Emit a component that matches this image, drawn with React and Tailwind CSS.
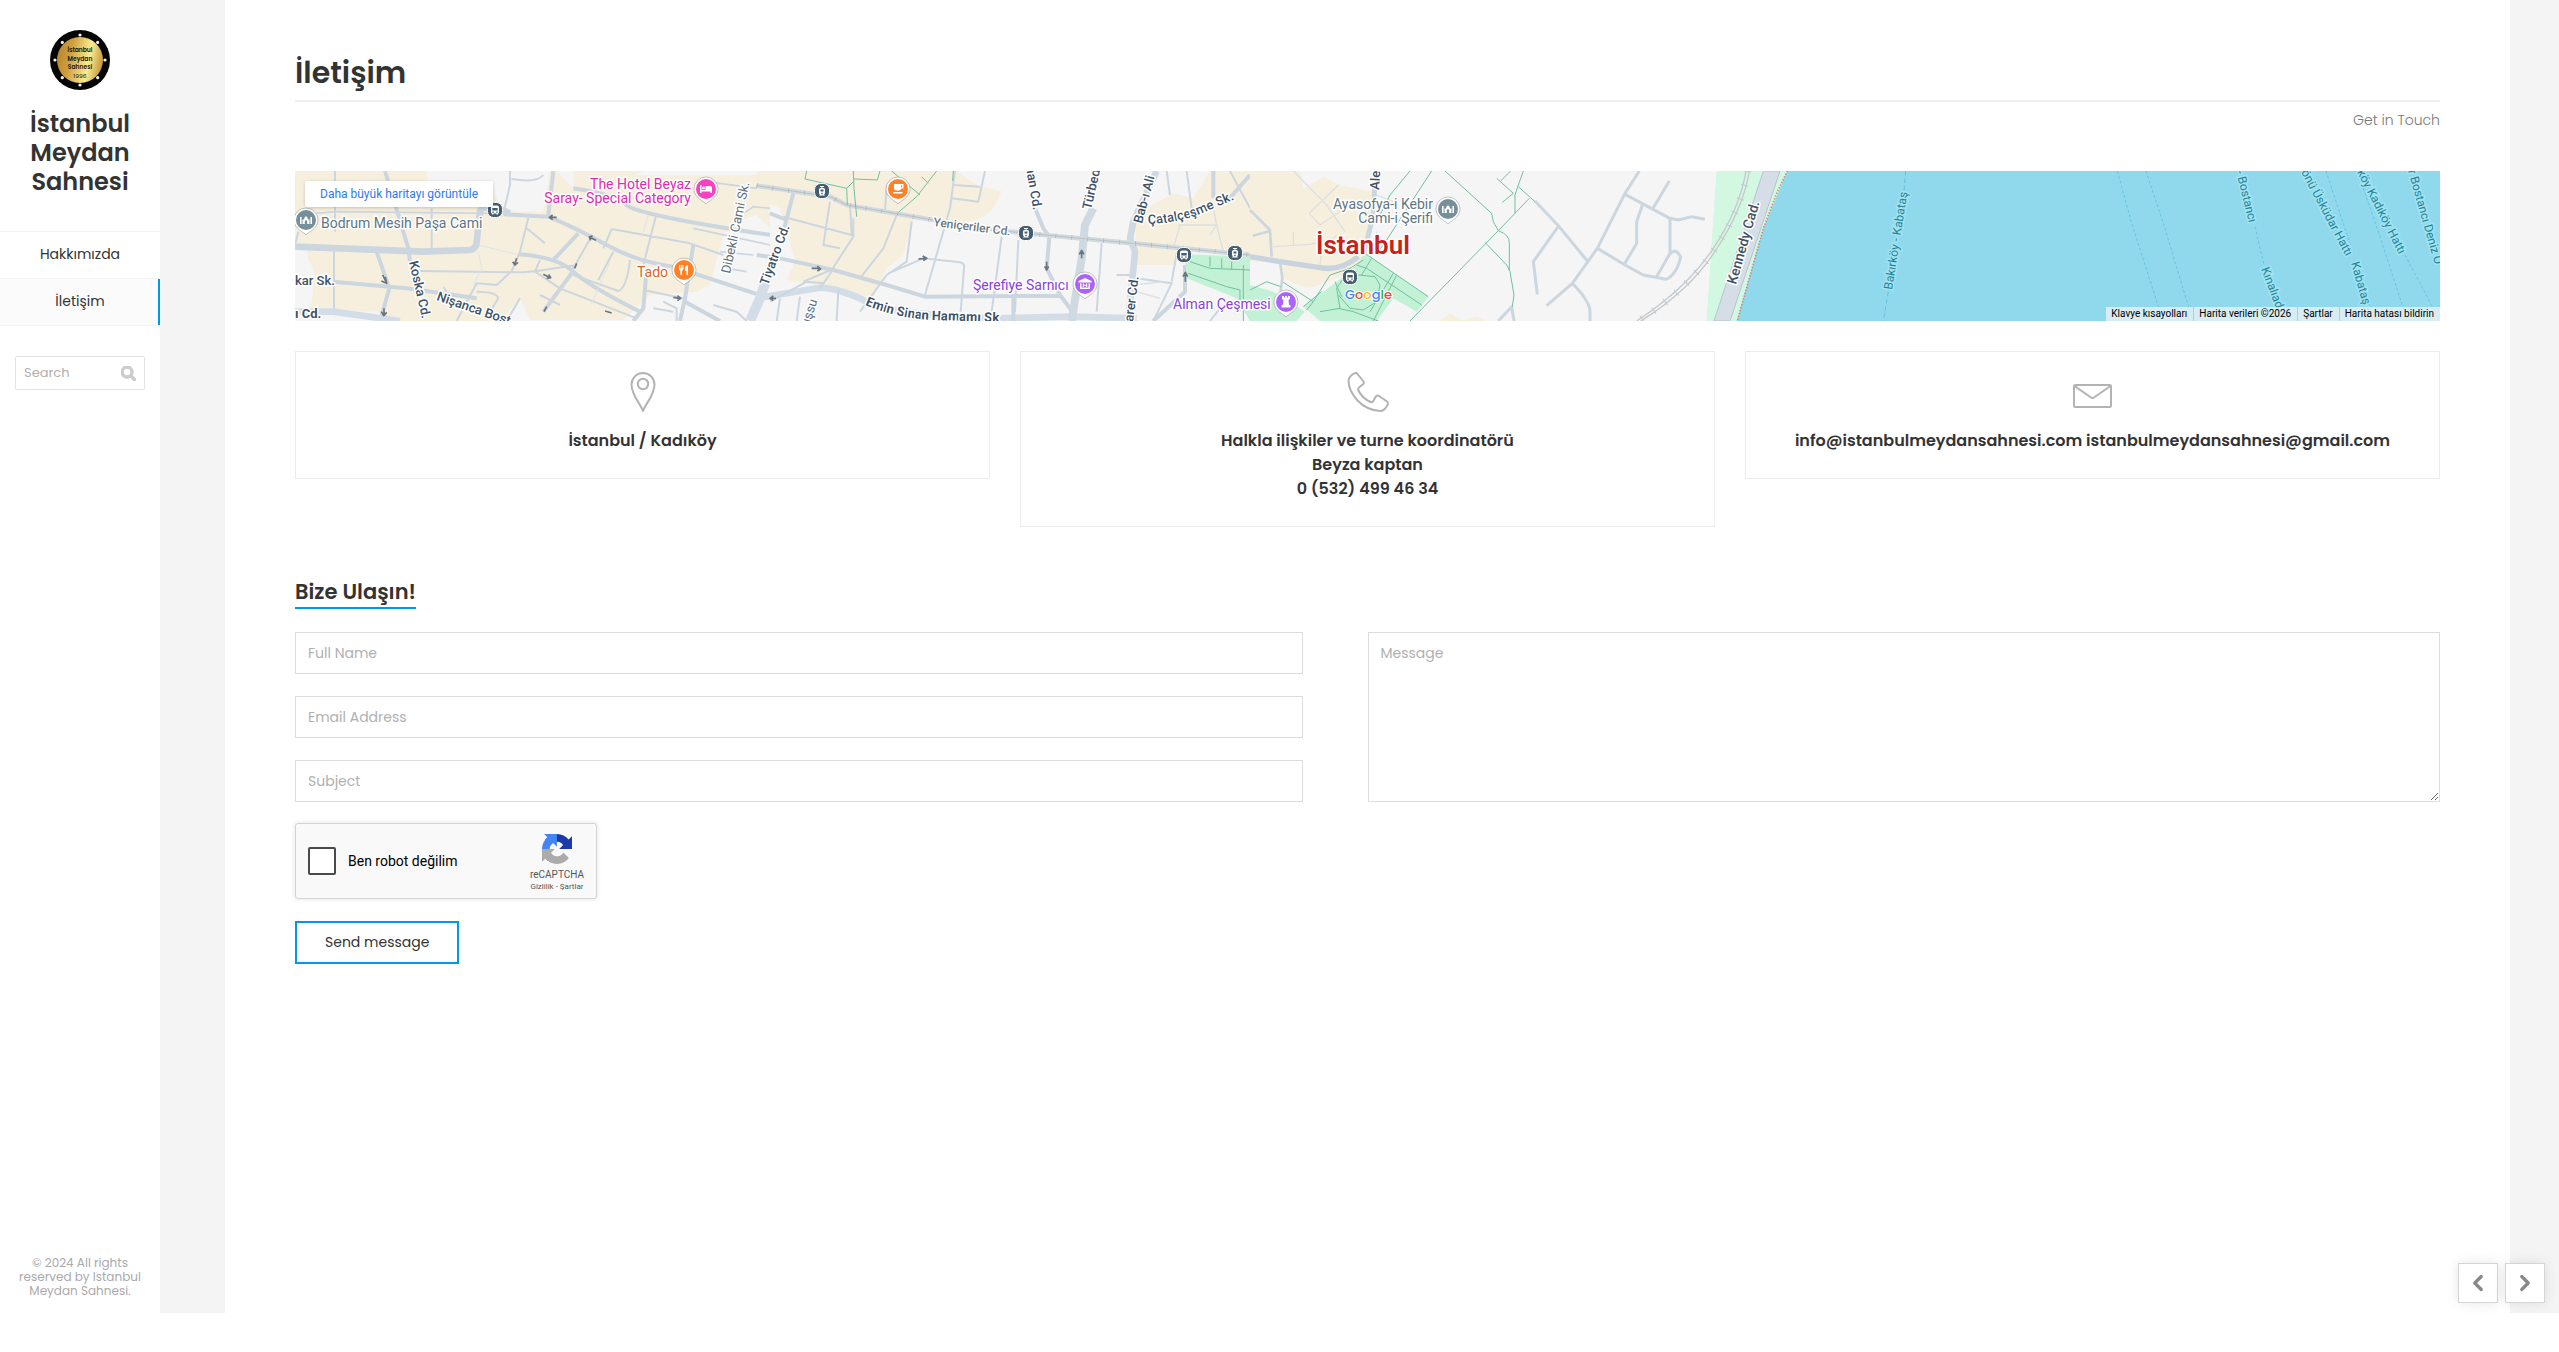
import { ChevronLeft, ChevronRight } from "lucide-react";
import { FaSearch } from "react-icons/fa";

const navLinks = [
  { title: "Hakkımızda", active: false },
  { title: "İletişim", active: true },
];

const fields = [
  { name: "fullname", placeholder: "Full Name", type: "text" },
  { name: "email", placeholder: "Email Address", type: "email" },
  { name: "subject", placeholder: "Subject", type: "text" },
];

const mapLinks = ["Klavye kısayolları", "Harita verileri ©2026", "Şartlar", "Harita hatası bildirin"];

function Logo() {
  const studs = [0, 45, 90, 135, 180, 225, 270, 315];
  return (
    <svg viewBox="0 0 60 60" className="w-[60px] h-[60px]" role="img" aria-label="Logo">
      <defs>
        <linearGradient id="gold" x1="0" x2="1" y1="0.3" y2="0.5">
          <stop offset="0" stopColor="#b8862f" />
          <stop offset="0.3" stopColor="#cf9f3f" />
          <stop offset="0.7" stopColor="#f9ec92" />
          <stop offset="1" stopColor="#c8983a" />
        </linearGradient>
      </defs>
      <circle cx="30" cy="30" r="30" fill="#050505" />
      <circle cx="30" cy="30" r="23" fill="url(#gold)" />
      {studs.map((a) => (
        <circle key={a} cx="30" cy="5" r="1.6" fill="#f4f4f4" transform={`rotate(${a} 30 30)`} />
      ))}
      <g fontFamily="Poppins, Inter, sans-serif" fontSize="6" fontWeight="600" fill="#1c1508" textAnchor="middle">
        <text x="30" y="22">İstanbul</text>
        <text x="30" y="31">Meydan</text>
        <text x="30" y="39">Sahnesi</text>
        <text x="30" y="48" fontWeight="400">1996</text>
      </g>
    </svg>
  );
}

function Sidebar() {
  return (
    <aside className="w-40 shrink-0 bg-white flex flex-col text-center pt-[30px] pb-[15px]">
      <div className="flex justify-center">
        <Logo />
      </div>
      <p className="mt-[19px] px-4 text-[24px] leading-[29px] font-semibold text-[#333]">
        İstanbul Meydan Sahnesi
      </p>
      <nav className="mt-[35px] border-t border-[#f4f4f4]">
        {navLinks.map((link) => (
          <a
            key={link.title}
            href="#"
            className={
              link.active
                ? "block h-[47px] leading-[44px] text-[14px] text-[#333] border-b border-[#f4f4f4] bg-[#fbfbfb] shadow-[inset_-2px_0_0_#0099e5]"
                : "block h-[47px] leading-[44px] text-[14px] text-[#333] border-b border-[#f4f4f4]"
            }
          >
            {link.title}
          </a>
        ))}
      </nav>
      <form className="mx-[15px] mt-[30px] h-[34px] flex items-center border border-[#e2e2e2] rounded-xs px-2">
        <input
          type="search"
          aria-label="Search"
          placeholder="Search"
          className="min-w-0 flex-1 text-[13px] outline-none placeholder:text-[#b0b0b0]"
        />
        <button type="button" aria-label="Search" className="text-[#ccc]">
          <FaSearch size={15} stroke="currentColor" strokeWidth={36} />
        </button>
      </form>
      <p className="mt-auto px-4 text-[12px] leading-[14px] text-[#aaa]">
        © 2024 All rights <br />
        reserved by Istanbul <br />
        Meydan Sahnesi.
      </p>
    </aside>
  );
}

// Pin with a round head, tip at (x, y)
function MapPin({ x, y, color, children }) {
  return (
    <g transform={`translate(${x} ${y})`}>
      <path
        d="M0 0C-2 -3 -12 -6 -12 -15A12 12 0 0 1 12 -15C12 -6 2 -3 0 0Z"
        fill="#fff"
        stroke="#8a8a8a"
        strokeOpacity="0.5"
        strokeWidth="1"
      />
      <circle cx="0" cy="-15" r="10" fill={color} />
      <g transform="translate(0 -15)" fill="#fff" stroke="none">
        {children}
      </g>
    </g>
  );
}

function Mosque() {
  return <path d="M-6 4v-7h1.600v7zM4.400 4v-7h1.600v7zM-3.500 4v-4.500h1.500q0-2 2-3.500q2 1.500 2 3.500h1.500v4.500h-2.300v-2.500a1.200 1.200 0 0 0-2.400 0v2.500z" />;
}

// Small round bus and tram stops
function Station({ x, y, tram }) {
  return (
    <g transform={`translate(${x} ${y})`}>
      <rect x="-7.500" y="-7.500" width="15" height="15" rx="6" fill="#455d70" stroke="#fff" strokeWidth="1" />
      {tram ? (
        <path
          d="M-2 -5h4v1h-1.500v1h1q1.500 0 1.500 1.500v3.500q0 1-1 1l1 1.500h-6l1-1.500q-1 0-1-1v-3.500q0-1.500 1.500-1.500h1v-1h-1.500zM-1.500 -1.500v2h3v-2zM-.7 1.800v1.400h1.400v-1.400z"
          fill="#fff"
          fillRule="evenodd"
        />
      ) : (
        <path
          d="M-4 -2.500q0-2 2-2h4q2 0 2 2v5q0 1-1 1v1h-1.500v-1h-3v1h-1.500v-1q-1 0-1-1zM-2.700 -2v2.500h5.400v-2.500zM-2.700 1.500v1.200h1.500v-1.200zM1.200 1.500v1.200h1.500v-1.200z"
          fill="#fff"
          fillRule="evenodd"
        />
      )}
    </g>
  );
}

function StreetMap() {
  return (
    <svg
      viewBox="0 0 2145 150"
      preserveAspectRatio="xMidYMid slice"
      className="block w-full h-[150px]"
      role="img"
      aria-label="İstanbul"
    >
      <defs>
        <path id="catalcesme" d="M853 53Q885 52 910 41T948 25" />
        <path id="emin" d="M570 134Q604 148 640 149T730 152" />
      </defs>
      <rect width="2145" height="150" fill="#f5f5f5" />
      <g transform="translate(-5 -6) scale(0.333333)" fill="none" strokeLinejoin="round">
        {/* Western blocks */}
        <path
          d="M15 18H410L415 55 560 75 620 18H800L850 70 1020 30H1440V190L1400 150 1340 170 1300 210 1260 360 1220 380 1080 390 1000 465H720L690 400 630 468H330L260 440 60 435 70 380 50 250H15Z"
          fill="#f7efdd"
        />
        <path d="M540 18H780L760 140 640 140 600 60Z" fill="#f5f5f5" />
        <path d="M850 18H1060L1010 40 1080 90 1020 190 950 130 850 70Z" fill="#f7efdd" />
        <path d="M15 290H60L75 330 50 420H15Z" fill="#f5f5f5" />
        <g stroke="#ccd6df" strokeWidth="6">
          <path d="M135 18V200M132 250V440M425 130V250M15 240 25 200M390 318 700 322 740 318 860 300M660 18V60L640 145M665 42Q740 55 760 30M715 158 690 260 665 318 620 360 560 355 530 410 500 468M750 285 735 320 810 370 1040 460M710 190 765 235M900 222 830 345M970 260 925 345M965 192 1200 235 1300 270M965 192 940 250M1020 285Q1010 370 985 378L850 330M560 380Q620 380 625 400L600 440M690 400 650 468M750 390 810 420M1060 375 1180 400M1100 145 1060 300M1270 420 1340 440 1370 468M1090 430 1150 440M1120 410 1160 430V468" />
          <path d="M1250 50 1400 70 1440 80M1210 190 1440 240M1340 160 1390 125 1440 130M1290 260 1390 270M1310 310 1370 320M460 365 470 380 450 400M15 150 140 140 600 145" strokeWidth="5" />
        </g>
        <g stroke="#ccd6df" strokeWidth="12">
          <path d="M285 18 355 250 360 290M260 260 298 370 275 450 310 468M130 350 350 370 560 400M790 18 775 150M865 205 790 285M850 318 760 440M640 148 775 155Q860 190 950 240T1150 305L1440 400M1210 240 1185 400 1170 468M850 70Q980 90 1010 120T1440 210" />
          <path d="M685 268Q800 275 850 320T1050 440M1070 310 1060 430 1030 468M1185 410 1290 468" />
        </g>
        <path d="M15 245 400 260 540 255Q560 250 560 230L570 140Q575 110 660 145" stroke="#ccd6df" strokeWidth="20" />
        <path d="M15 440H130L330 468" stroke="#d3dde8" strokeWidth="20" />
        <path d="M1430 340 1410 400 1380 468" stroke="#d3dde8" strokeWidth="30" />
        <path d="M565 240 680 268M565 260 575 310 550 360M1075 150 1055 215M960 290 905 415" stroke="#dfe3e6" strokeWidth="3" />
        <g stroke="#69757f" strokeWidth="5">
          <path d="M278 330 288 350M286 336 290 355 274 348M282 430V450M274 440 281 452 290 442M680 280 674 298M668 290 675 300 684 292M860 295 854 310M778 157H800M788 150 778 157 788 164M898 216 918 226M908 212 898 216 902 226M760 328 780 338M770 340 782 338 776 328M770 425 762 440M945 438 965 444M1150 397 1170 400M1162 392 1172 400 1162 407" />
        </g>

        {/* Yeniçeriler and the hotel quarter */}
        <g transform="translate(1440 0)">
          <path d="M-40 18H720L690 90Q660 170 580 170L430 165 400 270 350 310 310 400 260 390 220 370 140 360 50 345 75 290 30 130-40 100Z" fill="#f7efdd" />
          <path d="M560 18H780L700 80 620 60Z" fill="#f5f5f5" />
          <path d="M1130 130 1210 85 1270 100 1320 18H1440V280L1240 250 1210 300 1100 300 1095 170Z" fill="#f7efdd" />
          <path d="M-40 400 150 368Q210 370 290 410T680 460L900 455 1100 460" stroke="#d3dde8" strokeWidth="20" />
          <g stroke="#ccd6df" strokeWidth="12">
            <path d="M-40 270 30 280 190 315 350 360 465 395 870 392M795 130 820 190 838 215 830 310 870 390 915 450M730 395V468M0 145 50 165M70 85 40 200" />
            <path d="M970 130 945 180 935 280 905 468" stroke="#cfd9e2" strokeWidth="24" />
            <path d="M1160 18 1090 170 1080 220 1095 260 1075 468" stroke="#cfd9e2" strokeWidth="20" />
            <path d="M1440 30 1370 110M1330 18V100M1245 300V380L1150 468" />
          </g>
          <g stroke="#ccd6df" strokeWidth="6">
            <path d="M555 18 540 130 465 390M40 155 245 210 240 115M180 110 160 240 210 250M250 160V215L185 315M380 150 340 250 270 340M425 170 410 290 350 330 270 440M355 325 460 280 570 292Q585 295 582 310L572 440M695 215 665 440M745 225 735 440M995 235 980 440M1040 330H1080M550 60 630 65M545 100 625 110 645 18M350 60 345 140M100 350 190 312 150 370M0 410 110 350 160 355M205 375 200 468M1100 340 1205 355 1150 468M1220 265 1205 350M1190 18 1200 90M1250 18 1265 130M1320 468 1350 430M1380 18 1440 130M30 400 20 468M90 395 80 468" />
            <path d="M1225 180H1340L1360 260M1230 180 1210 250M1320 210 1340 180 1330 130M1100 380 1170 400M1090 360 1180 350" stroke="#dcdfe2" strokeWidth="4" />
          </g>
          <path d="M-40 62 180 95 230 120 490 165 720 200 1090 235 1440 270" stroke="#d2dade" strokeWidth="14" />
          <path d="M-40 62 180 95 230 120 490 165 720 200 1090 235 1440 270" stroke="#aab5bd" strokeWidth="2" />
          <path d="M-40 62 180 95 230 120 490 165 720 200 1090 235 1440 270" stroke="#aab5bd" strokeWidth="14" strokeDasharray="2 46" />
          <path d="M110 18 105 42 230 70 232 120M250 18 252 70 260 155M230 70 250 50M252 42 322 45 330 18M500 18 440 95 385 142M365 18 450 90M455 35 475 55M550 18 548 48" stroke="#6fc09f" strokeWidth="3" />
          <path d="M1245 268 1440 275V468L1400 400 1250 340Z" fill="#c3f1d5" />
          <path d="M1255 325 1370 365 1410 375V440M1260 290 1320 310 1440 315M1320 275V305M1385 290V315M1355 280V310M1420 300V468" stroke="#6fc09f" strokeWidth="3" />
          <g stroke="#69757f" strokeWidth="5">
            <path d="M125 310H150M142 303 152 312 142 318M445 282 468 280M458 273 470 280 460 287M0 400H18M10 393 0 400 10 407M830 290V312M824 304 830 315 836 304M935 280V260M928 268 935 256 942 268M1246 350V325M1239 335 1246 322 1253 335" />
          </g>
        </g>

        {/* Sultanahmet and Topkapı */}
        <g transform="translate(2880 0)">
          <path d="M0 18H150L160 70 220 35 270 60 370 80 360 250 310 320 180 370 165 330 90 290 0 290Z" fill="#f7efdd" />
          <path d="M95 300 240 320 170 370 100 340Z" fill="#f7efdd" />
          <path d="M570 468 600 445 640 468ZM630 468 680 455 710 468Z" fill="#f7efdd" />
          <path d="M0 360 70 380 165 440 140 468H0ZM345 265 535 395 500 440 430 400 380 468H210L160 425 260 350 320 300Z" fill="#c3f1d5" />
          <g stroke="#ccd6df" strokeWidth="7">
            <path d="M0 135 60 195 65 275M8 212 60 198M90 290 97 340 92 380" strokeWidth="8" />
            <path d="M375 50 370 150 340 270" strokeWidth="15" />
            <path d="M855 108 925 182 1012 288M925 184 850 290 862 388M1168 18 1125 85 1042 250 967 355 890 422M1258 48 1210 128M1125 88 1260 160 1285 165 1325 155 1365 163M1178 118 1160 170V235L1122 300M1260 160V265L1220 335M1042 250 1125 300 1180 330 1248 343Q1280 330 1292 275 1275 245 1258 270M967 355Q1020 410 1020 440V468M745 468 785 425 792 468" strokeWidth="9" />
          </g>
          <path d="M0 275 90 290 210 308Q270 320 325 275" stroke="#c9d3dd" strokeWidth="16" />
          <path d="M130 18 230 120 285 200M265 60 178 145 210 180 300 120M70 245 180 238 250 220M130 200V240M210 300 215 260 260 210M380 90 430 110M380 200V260" stroke="#dedfe0" strokeWidth="4" />
          <path
            d="M480 18 420 90 385 160M545 18 400 240 375 270M585 18 725 145 730 170 745 197 480 468M705 232 770 300 780 320 792 390 787 425M745 197Q780 210 778 235V315M745 197 838 100M740 40 790 85 757 112M782 18 752 48M820 18 805 60 795 90V145M805 65 855 110M345 265 535 395M320 300 350 310 515 420M365 280 335 330M440 330 370 468M430 325 360 440M0 375 50 350 92 365M100 352 190 410 170 435M215 380 160 425M190 410 240 330 300 310 340 285M255 350 275 395M325 330 375 335 390 360 380 410 340 435 300 430 265 390M265 430 310 440 385 468M280 340 260 370 270 430 210 440"
            stroke="#6fc09f"
            strokeWidth="3"
          />
          <path d="M1400 18H1620L1480 468H1370Z" fill="#d3f8e2" />
        </g>

        {/* Shore line and the sea */}
        <g transform="translate(4230 0)">
          <path d="M50 18H265L115 468H20Z" fill="#d3f8e2" />
          <path d="M190 18H240L90 468H42Z" fill="#d5dde6" stroke="#b9c2cf" strokeWidth="3" />
          <path d="M262 18H2300V468H110L190 190Z" fill="#90d9ed" />
          <path d="M262 18 230 85 190 190 112 468" stroke="#d8806c" strokeWidth="5" strokeDasharray="4 5" />
          <path d="M138 18Q120 130 40 250T-190 468M148 18Q130 130 48 255T-178 468" stroke="#c3c8cd" strokeWidth="4" />
          <path d="M143 18Q125 130 44 252T-184 468" stroke="#c3c8cd" strokeWidth="22" strokeDasharray="3 40" />
          <path d="M617 18 612 80M565 380 550 468" stroke="#68bfd6" strokeWidth="3" strokeDasharray="14 8" />
        </g>
        <g transform="translate(5310 -225)" stroke="#68c4dd" strokeWidth="3" strokeDasharray="9 6">
          <path d="M172 243 215 400 300 665M258 243 310 400 390 665M585 410 612 525M798 243 850 400 880 490M905 280 960 440 1035 670M1035 495 1125 665M925 640 950 693" />
        </g>
      </g>

      {/* Street and place names */}
      <g fontFamily="Roboto, sans-serif" stroke="#fff" strokeWidth="3" strokeLinejoin="round" paintOrder="stroke" fontSize="13" fontWeight="500" fill="#3e5166">
        <text x="0" y="114">kar Sk.</text>
        <text x="0" y="147" fontWeight="700">ı Cd.</text>
        <text transform="translate(114 91) rotate(77)">Koska Cd.</text>
        <text transform="translate(141 129) rotate(19)">Nişanca Bost</text>
        <text transform="translate(435 103) rotate(-78)" fontWeight="400" fill="#5f7080">Dibekli Cami Sk.</text>
        <text transform="translate(473 115) rotate(-70)">Tiyatro Cd.</text>
        <text transform="translate(514 156) rotate(-72)" fontWeight="400" fill="#5f7080">uşsu</text>
        <text transform="translate(638 55) rotate(7)" fontSize="12" fill="#6b7882">Yeniçeriler Cd.</text>
        <text transform="translate(730 -8) rotate(80)">man Cd.</text>
        <text transform="translate(796 39) rotate(-77)">Türbed</text>
        <text transform="translate(847 53) rotate(-75)">Bab-ı Ali</text>
        <text><textPath href="#catalcesme">Çatalçeşme Sk.</textPath></text>
        <text fontWeight="700"><textPath href="#emin">Emin Sinan Hamamı Sk</textPath></text>
        <text transform="translate(838 151) rotate(-83)">arer Cd.</text>
        <text transform="translate(1084 19) rotate(-86)">Ale</text>
        <text transform="translate(1441 114) rotate(-74)" fontSize="14">Kennedy Cad.</text>
      </g>
      <g fontFamily="Roboto, sans-serif" stroke="#a3e2f2" strokeWidth="3" paintOrder="stroke" fontSize="12" fill="#1b8598">
        <text transform="translate(1597 119) rotate(-81)">Bakırköy - Kabataş</text>
        <text transform="translate(1939 -8) rotate(76)">y - Bostancı</text>
        <text transform="translate(2006 1) rotate(62)">önü Üsküdar Hattı</text>
        <text transform="translate(2062 1) rotate(63)">köy Kadıköy Hattı</text>
        <text transform="translate(2113 0) rotate(74)">r Bostancı Deniz O</text>
        <text transform="translate(1966 98) rotate(69)">Kınalıad</text>
        <text transform="translate(2056 92) rotate(74)">Kabataş -</text>
      </g>
      <g fontFamily="Roboto, sans-serif" stroke="#fff" strokeWidth="3" strokeLinejoin="round" paintOrder="stroke" fontSize="14">
        <text x="26" y="57" fill="#5c7684">Bodrum Mesih Paşa Cami</text>
        <g fill="#e02bb0" textAnchor="end">
          <text x="396" y="18">The Hotel Beyaz</text>
          <text x="396" y="32">Saray- Special Category</text>
        </g>
        <text x="342" y="106" fill="#d9651f">Tado</text>
        <text x="678" y="119" fill="#8b40d8">Şerefiye Sarnıcı</text>
        <text x="878" y="138" fill="#8b40d8">Alman Çeşmesi</text>
        <g fill="#5c7684" textAnchor="end">
          <text x="1138" y="38">Ayasofya-i Kebir</text>
          <text x="1138" y="52">Cami-i Şerifi</text>
        </g>
        <text x="1021" y="83" fontSize="26" fontWeight="600" fill="#c5221a">İstanbul</text>
      </g>

      <MapPin x={11} y={64} color="#768f9a"><Mosque /></MapPin>
      <MapPin x={1153} y={53} color="#768f9a"><Mosque /></MapPin>
      <MapPin x={411} y={33} color="#f741c2">
        <path d="M-6 -4h1.500v5h4v-4h4.500q2 0 2 2v5h-1.500v-1.500h-9v1.500h-1.500z" />
        <circle cx="-2.500" cy="-1" r="1.500" />
      </MapPin>
      <MapPin x={389} y={114} color="#ff8126">
        <path d="M-5 -5h1v3h.7v-3h1v3h.7v-3h1v4q0 1.500-1.500 1.800v4h-1.500v-4q-1.400-.3-1.400-1.800zM4 -5v10h-1.500v-4h-1.500v-3q0-2.500 3-3z" />
      </MapPin>
      <MapPin x={603} y={33} color="#ff8126">
        <path d="M-4 -5h9.500v4.500h-2.500q0 2-2 2h-3q-2 0-2-2zM3 -3.500v1.700h1.200v-1.700zM-5 3h9.500v1.500h-9.500z" fillRule="evenodd" />
      </MapPin>
      <MapPin x={790} y={128} color="#ad62fa">
        <path d="M0 -6l6.500 3v1.500h-13v-1.500zM-5 -.5h1.500v4h7v-4h1.500v5.500h-10zM-2.200 -.5h1.200v1.200h2v-1.200h1.200v3.500h-1.200v-1.200h-2v1.200h-1.200z" />
      </MapPin>
      <MapPin x={991} y={146} color="#ad62fa">
        <path d="M-4 -6h2v1.500h1v-1.500h2v1.500h1v-1.500h2v3l-1.500 1 .5 4.500 1.500 1v2h-9v-2l1.500-1 .5-4.500-1.500-1z" />
      </MapPin>
      <Station x={200} y={39} />
      <Station x={527} y={20} tram />
      <Station x={731} y={62} tram />
      <Station x={889} y={84} />
      <Station x={940} y={82} tram />
      <Station x={1055} y={106} />
      <text x="1050" y="128" fontFamily="Poppins, Inter, sans-serif" fontSize="13" fontWeight="500" stroke="#fff" strokeWidth="2" paintOrder="stroke">
        <tspan fill="#4285f4">G</tspan>
        <tspan fill="#ea4335">o</tspan>
        <tspan fill="#fbbc04">o</tspan>
        <tspan fill="#4285f4">g</tspan>
        <tspan fill="#34a853">l</tspan>
        <tspan fill="#ea4335">e</tspan>
      </text>
    </svg>
  );
}

function MapSection() {
  return (
    <section className="relative mt-[41px] overflow-hidden font-[Roboto,sans-serif]">
      <StreetMap />
      <a
        href="#"
        className="absolute left-[10px] top-[10px] h-[26px] px-[15px] leading-[26px] rounded-xs bg-white text-[12px] text-[#3079ed] shadow-[0_1px_4px_-1px_rgba(0,0,0,0.3)]"
      >
        Daha büyük haritayı görüntüle
      </a>
      <div className="absolute right-0 bottom-0 flex gap-px text-[10px] leading-[14px] text-black">
        {mapLinks.map((item) => (
          <a key={item} href="#" className="h-[14px] pl-[5px] pr-[6px] bg-[#f5f5f5]/70">
            {item}
          </a>
        ))}
      </div>
    </section>
  );
}

function InfoCard({ icon, children }) {
  return (
    <div className="border border-[#ececec] pt-5 pb-[25px] px-4 text-center">
      <svg
        viewBox="0 0 42 40"
        className="w-[42px] h-10 mx-auto"
        fill="none"
        stroke="#b3b3b3"
        strokeWidth="2"
        strokeLinejoin="round"
      >
        {icon}
      </svg>
      <h4 className="mt-[17px] text-[16px] leading-[24px] font-semibold text-[#333]">{children}</h4>
    </div>
  );
}

function Recaptcha() {
  return (
    <div className="mt-[21px] w-[302px] h-[76px] flex items-center border border-[#d3d3d3] rounded-[3px] bg-[#f9f9f9] px-3 shadow-[0_0_4px_1px_rgba(0,0,0,0.08)] font-[Roboto,sans-serif]">
      <input
        id="robot"
        type="checkbox"
        className="appearance-none w-7 h-7 bg-white border-2 border-[#4a4a4a] rounded-xs"
      />
      <label htmlFor="robot" className="ml-3 text-[14px] leading-[17px] text-black">
        Ben robot değilim
      </label>
      <div className="ml-auto pt-1 flex flex-col items-center text-[#555]">
        <svg viewBox="0 0 64 64" className="w-[30px] h-[30px]">
          <path fill="#1c3aa9" d="M64 31.955l-.033-1.370V4.687l-7.160 7.160C50.900 4.674 41.980.093 32.007.093c-10.380 0-19.600 4.960-25.420 12.640l11.736 11.860a15.550 15.550 0 0 1 4.754-5.334c2.050-1.600 4.952-2.906 8.968-2.906.485 0 .86.057 1.135.163 4.976.393 9.288 3.140 11.828 7.124l-8.307 8.307L64 31.953" />
          <path fill="#4285f4" d="M31.862.094l-1.370.033H4.594l7.160 7.160C4.580 13.147 0 22.070 0 32.040c0 10.380 4.960 19.600 12.640 25.420L24.500 45.725a15.550 15.550 0 0 1-5.334-4.754c-1.600-2.050-2.906-4.952-2.906-8.968 0-.485.057-.86.163-1.135.393-4.976 3.140-9.288 7.124-11.828l8.307 8.307L31.860.095" />
          <path fill="#ababab" d="M.001 32.045l.033 1.370v25.898l7.160-7.160c5.860 7.173 14.774 11.754 24.740 11.754 10.380 0 19.600-4.960 25.420-12.640l-11.736-11.860a15.550 15.550 0 0 1-4.754 5.334c-2.050 1.600-4.952 2.906-8.968 2.906-.485 0-.86-.057-1.135-.163-4.976-.393-9.288-3.140-11.828-7.124l8.307-8.307L.001 32.045" />
        </svg>
        <p className="mt-1 text-[10px] leading-[14px]">reCAPTCHA</p>
        <p className="text-[8px] leading-[10px]">
          <a href="#">Gizlilik</a> - <a href="#">Şartlar</a>
        </p>
      </div>
    </div>
  );
}

function ContactForm() {
  return (
    <section className="mt-[50px]">
      <h2 className="inline-block text-[21px] leading-[30px] font-semibold text-[#333] border-b-2 border-[#0099e5]">
        Bize Ulaşın!
      </h2>
      <form className="mt-[23px]">
        <div className="flex justify-between">
          <div className="w-[47%] flex flex-col gap-[22px]">
            {fields.map((field) => (
              <input
                key={field.name}
                name={field.name}
                type={field.type}
                aria-label={field.placeholder}
                placeholder={field.placeholder}
                className="h-[42px] px-3 border border-[#ddd] text-[14px] outline-none placeholder:text-[#b0b0b0]"
              />
            ))}
          </div>
          <textarea
            name="message"
            aria-label="Message"
            placeholder="Message"
            className="w-1/2 px-3 py-[10px] border border-[#ddd] text-[14px] leading-[20px] outline-none resize placeholder:text-[#b0b0b0]"
          />
        </div>
        <Recaptcha />
        <button
          type="button"
          className="mt-[22px] h-[43px] px-7 border-2 border-[#0099e5] text-[14px] text-[#333]"
        >
          Send message
        </button>
      </form>
    </section>
  );
}

function App() {
  return (
    <div className="min-h-screen flex bg-white pb-[39px] font-[Poppins,Inter,sans-serif]">
      <Sidebar />
      <div className="flex-1 min-w-0 flex bg-[#f4f4f4] pl-[65px] pr-[49px]">
        <main className="flex-1 min-w-0 bg-white px-[70px] pt-[53px] pb-10">
          <h1 className="pb-[7px] text-[30px] leading-[40px] font-semibold text-[#333] border-b-2 border-[#efefef]">
            İletişim
          </h1>
          <p className="mt-2 text-right text-[14px] leading-[20px] font-light text-[#777]">Get in Touch</p>

          <MapSection />

          <div className="mt-[30px] grid grid-cols-3 gap-[30px] items-start">
            <InfoCard
              icon={
                <>
                  <path d="M21 39C18 31 9.500 23 9.500 12.500a11.500 11.500 0 0 1 23 0C32.500 23 24 31 21 39Z" />
                  <circle cx="21" cy="12" r="5.200" />
                </>
              }
            >
              İstanbul / Kadıköy
            </InfoCard>
            <InfoCard
              icon={
                <path d="M7.500 1.300Q9.500.3 10.500 2L16.500 9.500Q17.500 11 16 12.300L12.500 15Q10.500 16.300 11.500 18.500Q15 26 23.500 30Q25.300 30.800 26.300 29L28.500 25Q29.800 22.800 32 24L40 29.500Q41.500 31 40.500 33Q37.500 39 33.500 39Q20 38.500 10.500 28.500Q1.500 18.500 1.500 8.500Q2 4 7.500 1.300Z" />
              }
            >
              Halkla ilişkiler ve turne koordinatörü
              <br />
              Beyza kaptan
              <br />
              0 (532) 499 46 34
            </InfoCard>
            <InfoCard
              icon={
                <>
                  <rect x="2" y="13" width="37" height="22" rx="1.500" />
                  <path d="M2.500 14 19 25.500Q20.500 26.500 22 25.500L38.500 14" />
                </>
              }
            >
              info@istanbulmeydansahnesi.com istanbulmeydansahnesi@gmail.com
            </InfoCard>
          </div>

          <ContactForm />
        </main>
      </div>

      {/* Prev / next page buttons */}
      <div className="fixed right-[14px] bottom-[49px] flex gap-[7px]">
        <button
          type="button"
          aria-label="Previous"
          className="w-10 h-10 flex items-center justify-center bg-white border border-[#d5d5d5] text-[#888] shadow-[0_0_12px_rgba(0,0,0,0.1)]"
        >
          <ChevronLeft size={26} strokeWidth={3} />
        </button>
        <button
          type="button"
          aria-label="Next"
          className="w-10 h-10 flex items-center justify-center bg-white border border-[#d5d5d5] text-[#888] shadow-[0_0_12px_rgba(0,0,0,0.1)]"
        >
          <ChevronRight size={26} strokeWidth={3} />
        </button>
      </div>
    </div>
  );
}

export default App;
